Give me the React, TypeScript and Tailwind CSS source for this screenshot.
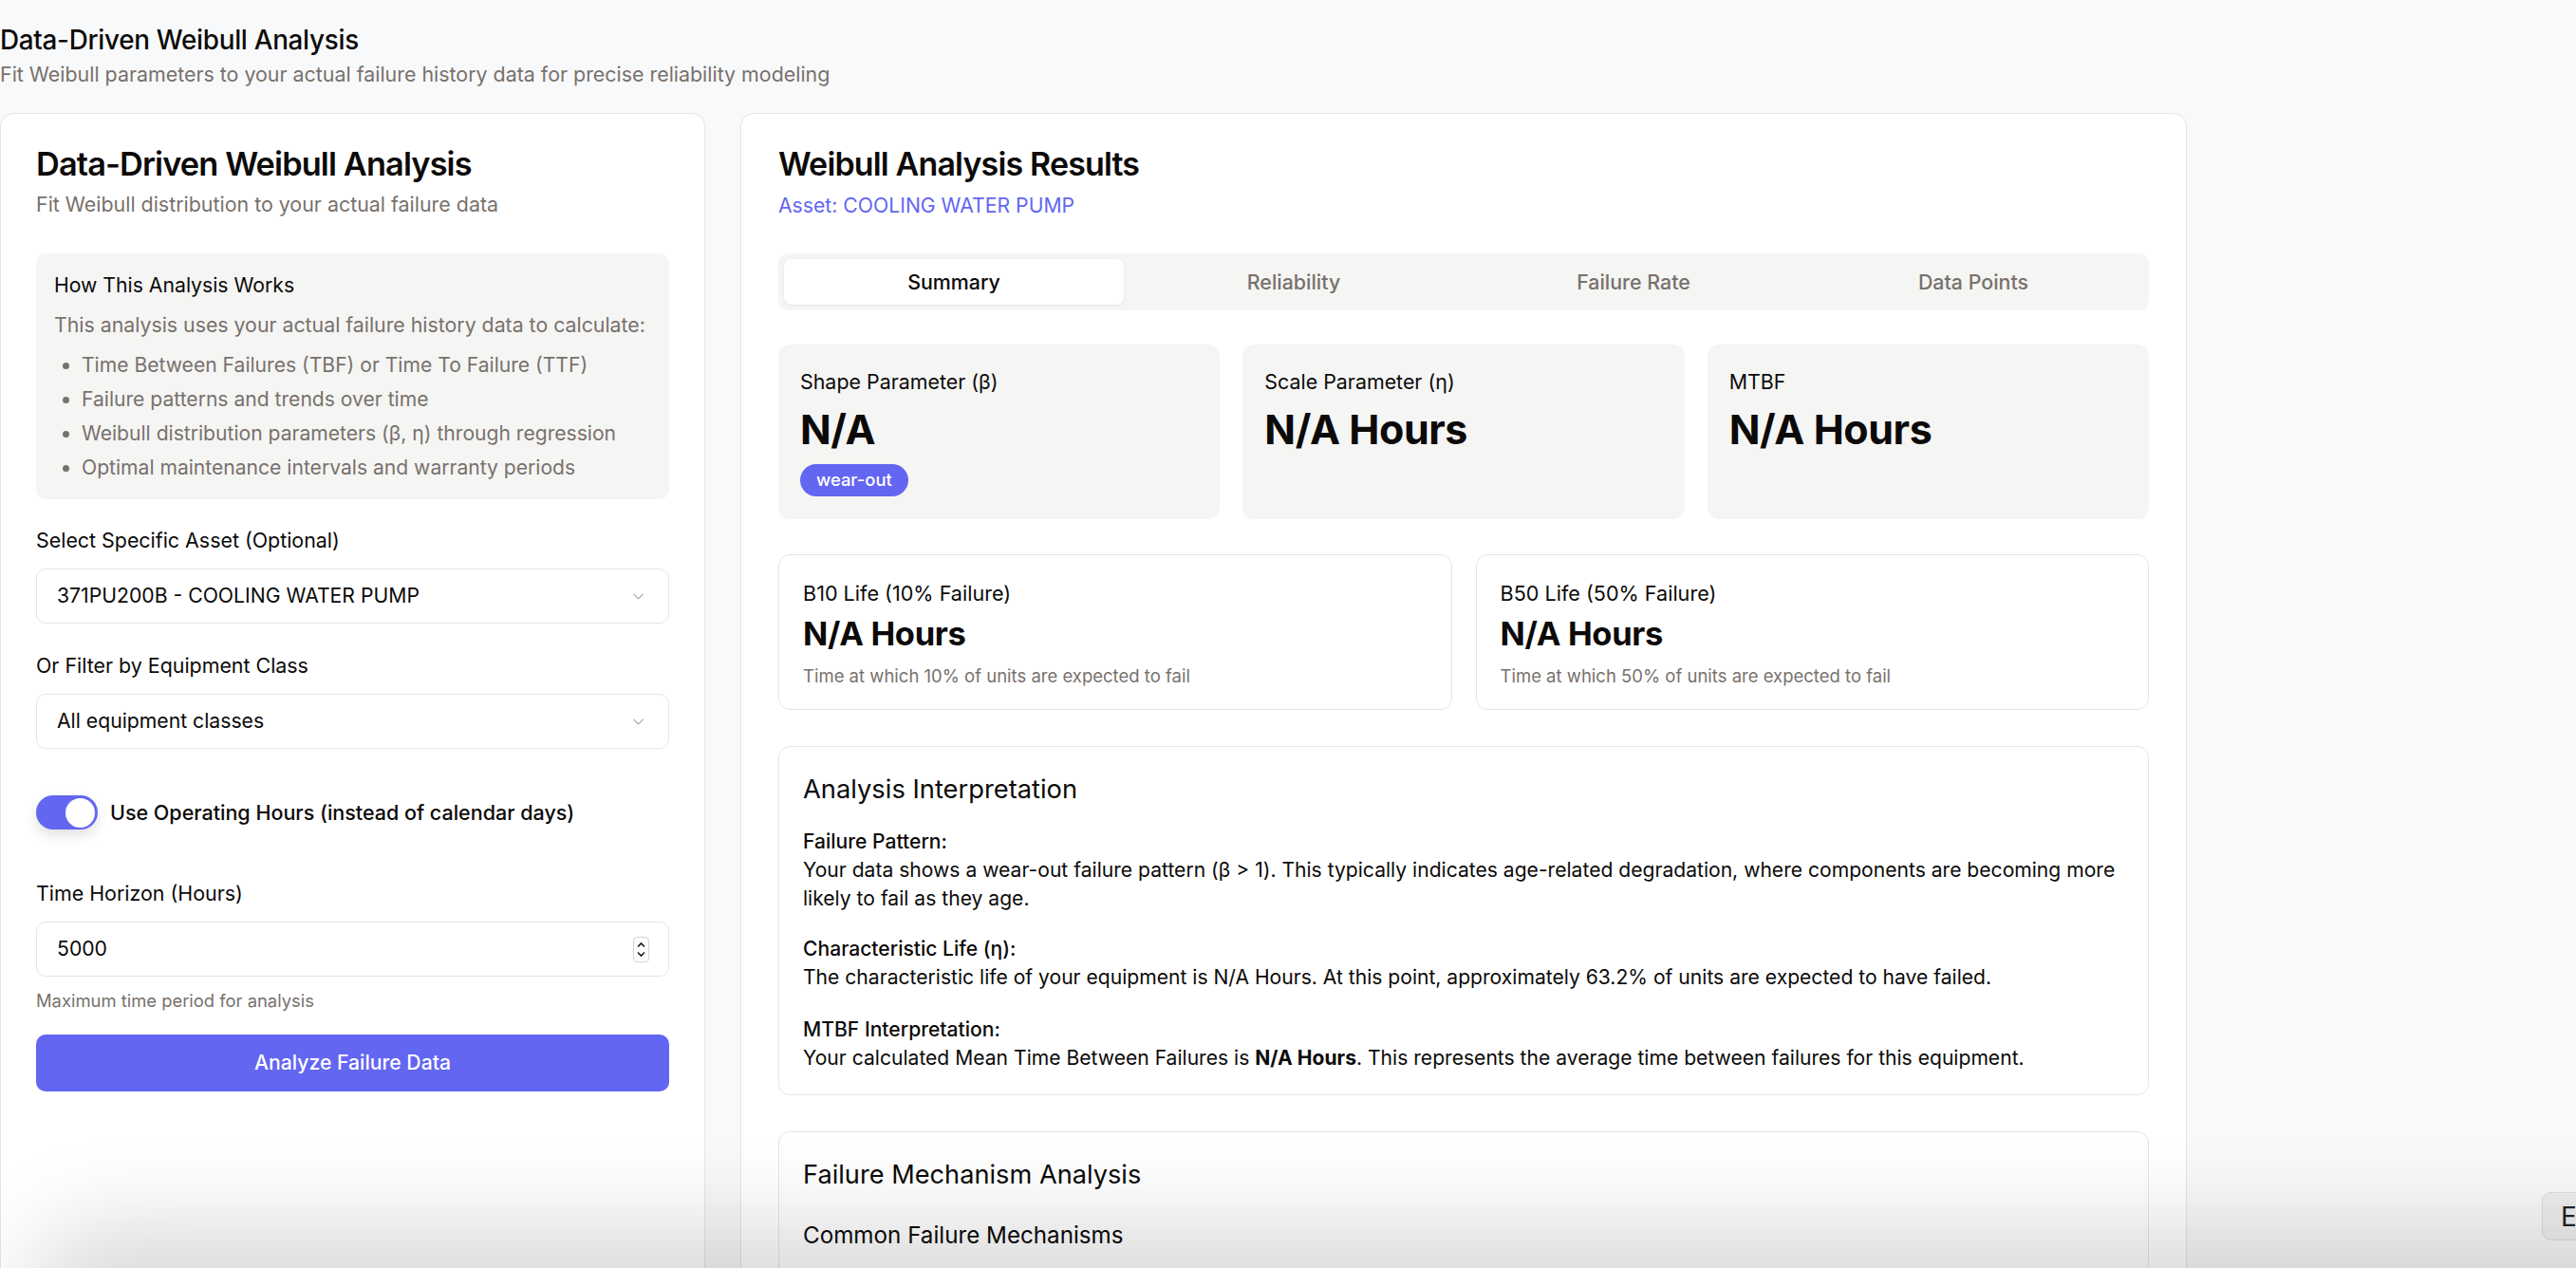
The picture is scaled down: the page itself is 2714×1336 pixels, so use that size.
import { ChevronDown } from "lucide-react";

const bullets = [
  "Time Between Failures (TBF) or Time To Failure (TTF)",
  "Failure patterns and trends over time",
  "Weibull distribution parameters (β, η) through regression",
  "Optimal maintenance intervals and warranty periods",
];

const tabs = ["Summary", "Reliability", "Failure Rate", "Data Points"];

function Field({ label, value }: { label: string; value: string }) {
  return (
    <div>
      <label className="block text-[21.4px] leading-[28px]">{label}</label>
      <div className="mt-[16px] flex h-[58px] items-center justify-between rounded-[10px] border border-[#e7e5e4] bg-white pl-[21px] pr-[22px] text-[21.2px]">
        <span>{value}</span>
        <ChevronDown className="h-[19px] w-[19px] text-[#a8a29e]" strokeWidth={1.4} />
      </div>
    </div>
  );
}

function LeftPanel() {
  return (
    <div className="w-[743px] shrink-0 rounded-[14px] border border-[#e7e5e4] bg-white px-[37px] pt-[33px] pb-[40px]">
      <h2 className="text-[34.3px] leading-[40px] font-semibold tracking-[-0.025em]">Data-Driven Weibull Analysis</h2>
      <p className="mt-[8px] text-[21.4px] leading-[28px] text-[#78716c]">Fit Weibull distribution to your actual failure data</p>

      <div className="mt-[38px] rounded-[10px] bg-[#f5f5f4] px-[19px] pt-[19px] pb-[15px]">
        <h3 className="text-[21.2px] leading-[28px]">How This Analysis Works</h3>
        <p className="mt-[14px] text-[21.3px] leading-[28px] text-[#78716c]">
          This analysis uses your actual failure history data to calculate:
        </p>
        <ul className="mt-[11px] list-disc pl-[29px] text-[21.1px] leading-[36px] text-[#78716c]">
          {bullets.map((b) => (
            <li key={b}>{b}</li>
          ))}
        </ul>
      </div>

      <div className="mt-[29px]">
        <Field label="Select Specific Asset (Optional)" value="371PU200B - COOLING WATER PUMP" />
      </div>
      <div className="mt-[30px]">
        <Field label="Or Filter by Equipment Class" value="All equipment classes" />
      </div>

      <div className="mt-[49px] flex items-center gap-[13px]">
        <div className="flex h-[36px] w-[65px] items-center justify-end rounded-full bg-[#6366f1] pr-[3px] shadow-[0_6px_14px_rgba(0,0,0,0.12)]">
          <div className="h-[31px] w-[31px] rounded-full bg-white" />
        </div>
        <span className="text-[21.5px] leading-[28px] font-medium">Use Operating Hours (instead of calendar days)</span>
      </div>

      <div className="mt-[53px]">
        <label className="block text-[21.4px] leading-[28px]">Time Horizon (Hours)</label>
        <div className="mt-[16px] flex h-[58px] items-center justify-between rounded-[10px] border border-[#e7e5e4] bg-white pl-[21px] pr-[20px] text-[21.2px]">
          <span>5000</span>
          <div className="flex h-[27px] w-[17px] flex-col items-center justify-center rounded-[4px] border border-[#d6d3d1] bg-white">
            <svg width="9" height="7" viewBox="0 0 9 7" className="mb-[3px]">
              <path d="M1 5.5 L4.5 2 L8 5.5" fill="none" stroke="#1c1917" strokeWidth="1.6" />
            </svg>
            <svg width="9" height="7" viewBox="0 0 9 7">
              <path d="M1 1.5 L4.5 5 L8 1.5" fill="none" stroke="#1c1917" strokeWidth="1.6" />
            </svg>
          </div>
        </div>
        <p className="mt-[13px] text-[18.4px] leading-[24px] text-[#78716c]">Maximum time period for analysis</p>
      </div>

      <button className="mt-[24px] flex h-[60px] w-full items-center justify-center rounded-[10px] bg-[#6366f1] text-[21.2px] font-medium text-white">
        Analyze Failure Data
      </button>
    </div>
  );
}

function Metric({ label, value, badge }: { label: string; value: string; badge?: string }) {
  return (
    <div className="h-[184px] rounded-[12px] bg-[#f5f5f4] px-[23px] pt-[26px]">
      <div className="text-[21.4px] leading-[26px]">{label}</div>
      <div className="mt-[12px] text-[43px] leading-[50px] font-bold tracking-[-0.01em]">{value}</div>
      {badge && (
        <span className="mt-[12px] inline-flex h-[34px] items-center rounded-full bg-[#6366f1] px-[17px] text-[18.4px] font-medium text-white">
          {badge}
        </span>
      )}
    </div>
  );
}

function LifeCard({ label, desc }: { label: string; desc: string }) {
  return (
    <div className="h-[164px] rounded-[12px] border border-[#e7e5e4] bg-white px-[25px] pt-[27px]">
      <div className="text-[21.6px] leading-[26px]">{label}</div>
      <div className="mt-[9px] text-[34.5px] leading-[42px] font-bold tracking-[-0.01em]">N/A Hours</div>
      <div className="mt-[11px] text-[18.5px] leading-[24px] text-[#78716c]">{desc}</div>
    </div>
  );
}

function RightPanel() {
  return (
    <div className="w-[1524px] shrink-0 rounded-[14px] border border-[#e7e5e4] bg-white px-[39px] pt-[33px] pb-[40px]">
      <h2 className="text-[34px] leading-[40px] font-semibold tracking-[-0.025em]">Weibull Analysis Results</h2>
      <p className="mt-[9px] text-[21.2px] leading-[28px] text-[#6366f1]">Asset: COOLING WATER PUMP</p>

      <div className="mt-[37px] grid h-[60px] grid-cols-4 rounded-[10px] bg-[#f5f5f4] p-[6px]">
        {tabs.map((t, i) => (
          <div
            key={t}
            className={
              i === 0
                ? "flex items-center justify-center rounded-[8px] bg-white text-[21.4px] font-medium shadow-[0_1px_3px_rgba(0,0,0,0.08)]"
                : "flex items-center justify-center text-[21.4px] font-medium text-[#78716c]"
            }
          >
            {t}
          </div>
        ))}
      </div>

      <div className="mt-[36px] grid grid-cols-3 gap-[24px]">
        <Metric label="Shape Parameter (β)" value="N/A" badge="wear-out" />
        <Metric label="Scale Parameter (η)" value="N/A Hours" />
        <Metric label="MTBF" value="N/A Hours" />
      </div>

      <div className="mt-[37px] grid grid-cols-2 gap-[25px]">
        <LifeCard label="B10 Life (10% Failure)" desc="Time at which 10% of units are expected to fail" />
        <LifeCard label="B50 Life (50% Failure)" desc="Time at which 50% of units are expected to fail" />
      </div>

      <div className="mt-[38px] rounded-[12px] border border-[#e7e5e4] bg-white px-[25px] pt-[29px] pb-[23px]">
        <h3 className="text-[27.3px] leading-[32px]">Analysis Interpretation</h3>
        <div className="mt-[24px] text-[21.1px] leading-[30px]">
          <div className="font-medium">Failure Pattern:</div>
          <p>
            Your data shows a wear-out failure pattern (β &gt; 1). This typically indicates age-related degradation, where
            components are becoming more likely to fail as they age.
          </p>
        </div>
        <div className="mt-[23px] text-[21.1px] leading-[30px]">
          <div className="font-medium">Characteristic Life (η):</div>
          <p>
            The characteristic life of your equipment is N/A Hours. At this point, approximately 63.2% of units are
            expected to have failed.
          </p>
        </div>
        <div className="mt-[25px] text-[21.1px] leading-[30px]">
          <div className="font-medium">MTBF Interpretation:</div>
          <p>
            Your calculated Mean Time Between Failures is <b className="font-bold">N/A Hours</b>. This represents the
            average time between failures for this equipment.
          </p>
        </div>
      </div>

      <div className="mt-[38px] rounded-[12px] border border-[#e7e5e4] bg-white px-[25px] pt-[29px] pb-[80px]">
        <h3 className="text-[27.2px] leading-[32px]">Failure Mechanism Analysis</h3>
        <h4 className="mt-[33px] text-[24.2px] leading-[30px]">Common Failure Mechanisms</h4>
      </div>
    </div>
  );
}

export default function App() {
  return (
    <div className="relative h-[1336px] overflow-hidden bg-[#f8f9fa] font-['Inter',sans-serif] text-[#0c0a09]">
      <div className="pt-[26px]">
        <h1 className="text-[27.8px] leading-[32px] font-medium tracking-[-0.01em]">Data-Driven Weibull Analysis</h1>
        <p className="mt-[6px] text-[21.4px] leading-[28px] text-[#78716c]">
          Fit Weibull parameters to your actual failure history data for precise reliability modeling
        </p>
      </div>

      <div className="mt-[27px] flex items-stretch gap-[37px]">
        <LeftPanel />
        <RightPanel />
      </div>

      {/* floating widget peeking in from the right edge */}
      <div className="absolute right-[-54px] bottom-[29px] flex h-[51px] w-[90px] items-center rounded-[10px] border border-[#dcdcdc] bg-[#efefef] pl-[19px] text-[28px] text-[#222]">
        E
      </div>

      {/* soft shadow along the bottom edge */}
      <div className="pointer-events-none absolute bottom-[-90px] left-[70px] right-[-120px] h-[90px] rounded-[80px] shadow-[0_0_100px_45px_rgba(0,0,0,0.15)]" />
    </div>
  );
}
